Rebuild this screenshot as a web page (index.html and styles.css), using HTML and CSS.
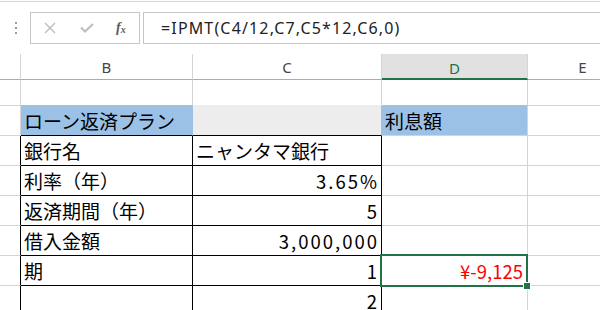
FILE: index.html
```html
<!DOCTYPE html>
<html>
<head>
  <title>IPMT</title>
  <link rel="stylesheet" href="styles.css">
</head>

<body>
  <div class="edge"></div>

  <div class="fbar">
    <div class="grip"><span></span><span></span><span></span></div>
    <div class="fbtns">
      <svg class="ico" width="12" height="12" viewBox="0 0 12 12">
        <path d="M1 1 L11 11 M11 1 L1 11" stroke="#bcbcbc" stroke-width="1.4" fill="none"/>
      </svg>
      <svg class="ico" width="14" height="10" viewBox="0 0 14 10">
        <path d="M1 4.5 L5 8.5 L13 1" stroke="#bcbcbc" stroke-width="2" fill="none"/>
      </svg>
      <span class="fx">f<sub>x</sub></span>
    </div>
    <div class="finput">=IPMT(C4/12,C7,C5*12,C6,0)</div>
  </div>

  <div class="sheet">
    <!-- column headers -->
    <div class="c h"></div>
    <div class="c h">B</div>
    <div class="c h">C</div>
    <div class="c h sel">D</div>
    <div class="c h">E</div>

    <!-- row above table -->
    <div class="c r1"></div>
    <div class="c r1 to-blue"></div>
    <div class="c r1 to-gray"></div>
    <div class="c r1 to-blue"></div>
    <div class="c r1"></div>

    <!-- title row -->
    <div class="c"></div>
    <div class="c blue kb nr">ローン返済プラン</div>
    <div class="c gray kb nr"></div>
    <div class="c blue">利息額</div>
    <div class="c"></div>

    <div class="c kr"></div>
    <div class="c kr kb">銀行名</div>
    <div class="c kr kb">ニャンタマ銀行</div>
    <div class="c"></div>
    <div class="c"></div>

    <div class="c kr"></div>
    <div class="c kr kb">利率（年）</div>
    <div class="c kr kb num wide">3.65%</div>
    <div class="c"></div>
    <div class="c"></div>

    <div class="c kr"></div>
    <div class="c kr kb">返済期間（年）</div>
    <div class="c kr kb num wide">5</div>
    <div class="c"></div>
    <div class="c"></div>

    <div class="c kr"></div>
    <div class="c kr kb">借入金額</div>
    <div class="c kr kb num wide">3,000,000</div>
    <div class="c"></div>
    <div class="c"></div>

    <div class="c kr"></div>
    <div class="c kr kb">期</div>
    <div class="c kr kb num wide">1</div>
    <div class="c num red active">¥-9,125</div>
    <div class="c"></div>

    <div class="c kr"></div>
    <div class="c kr kb"></div>
    <div class="c kr kb num wide">2</div>
    <div class="c"></div>
    <div class="c"></div>
  </div>
</body>
</html>
```

FILE: styles.css
```css
body {
  margin: 0;
  padding-top: 1px;
  width: 600px;
  height: 310px;
  overflow: hidden;
  background: #fff;
  font-family: "Noto Sans", sans-serif;
}

.edge {
  height: 1px;
  background: #d6d6d6;
}

/* formula bar */
.fbar {
  display: flex;
  height: 32px;
  margin-top: 10px;
}

.grip {
  width: 30px;
  display: flex;
  flex-direction: column;
  align-items: center;
  justify-content: center;
  gap: 3px;
  padding-left: 1px;
  box-sizing: border-box;
}

.grip span {
  width: 2px;
  height: 2px;
  background: #9a9a9a;
}

.fbtns {
  width: 110px;
  box-sizing: border-box;
  border: 1px solid #c6c6c6;
  display: flex;
  align-items: center;
  padding-left: 13px;
}

.ico {
  display: block;
}

.fbtns .ico + .ico {
  margin-left: 24px;
}

.fx {
  margin-left: 22px;
  font-family: "Liberation Serif", serif;
  font-style: italic;
  font-weight: bold;
  font-size: 14px;
  color: #5a5a5a;
}

.fx sub {
  font-size: 10px;
  vertical-align: -1px;
}

.finput {
  flex: 1;
  margin-left: 3px;
  margin-right: -4px;
  border: 1px solid #c6c6c6;
  padding-left: 17px;
  font-size: 16px;
  letter-spacing: 1.15px;
  line-height: 30px;
  color: #222;
}

/* worksheet */
.sheet {
  margin-top: 10px;
  display: grid;
  grid-template-columns: 21px 172px 189px 146px 110px;
  grid-template-rows: 26px 26px repeat(7, 30px);
  font-family: "Noto Sans CJK JP", sans-serif;
  font-size: 19px;
  color: #000;
}

.c {
  box-sizing: border-box;
  border-right: 1px solid #d4d4d4;
  border-bottom: 1px solid #d4d4d4;
  display: flex;
  align-items: center;
  padding: 0 3px;
  white-space: nowrap;
}

.h {
  justify-content: center;
  border-bottom-color: #ababab;
  font-family: "Noto Sans", sans-serif;
  font-size: 15px;
  color: #444;
  padding-top: 1px;
}

.h.sel {
  background: #e1e1e1;
  color: #217346;
  border-bottom: 2px solid #217346;
  padding-top: 3px;
}

.to-blue {
  border-bottom-color: #9bc2e6;
}

.to-gray {
  border-bottom-color: #ededed;
}

.blue {
  background: #9bc2e6;
}

.gray {
  background: #ededed;
}

.nr {
  border-right-color: #9bc2e6;
}

.kr {
  border-right-color: #000;
}

.kb {
  border-bottom-color: #000;
}

.num {
  justify-content: flex-end;
  padding-right: 4px;
  font-size: 18.5px;
}

.num.wide {
  letter-spacing: 2px;
  padding-right: 2px;
}

.red {
  color: #ff0000;
}

.active {
  position: relative;
}

.active::after {
  content: "";
  position: absolute;
  left: -2px;
  top: -2px;
  right: -1px;
  bottom: -2px;
  border: 2px solid #217346;
}

.active::before {
  content: "";
  position: absolute;
  right: -3px;
  bottom: -4px;
  width: 6px;
  height: 6px;
  background: #217346;
  box-shadow: 0 0 0 1px #fff;
  z-index: 1;
}
```
